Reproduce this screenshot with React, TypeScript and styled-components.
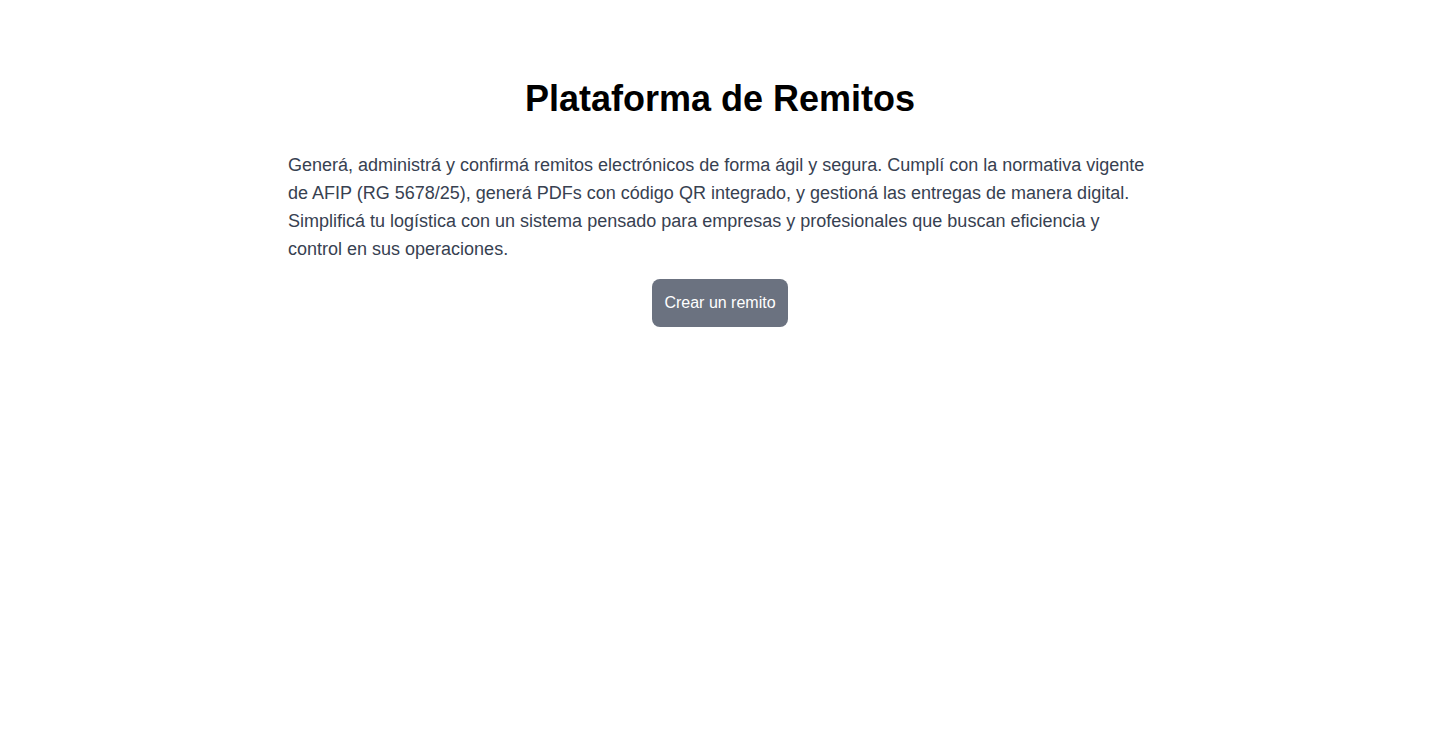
import React from 'react';
import styled, { createGlobalStyle } from 'styled-components';

const GlobalStyle = createGlobalStyle`
  * { box-sizing: border-box; }
  body {
    margin: 0;
    background: #fff;
    font-family: "Liberation Sans", Arial, sans-serif;
  }
`;

const Page = styled.main`
  max-width: 896px;
  margin: 0 auto;
  padding: 79px 16px 0;
  display: flex;
  flex-direction: column;
  align-items: center;
`;

const Title = styled.h1`
  margin: 0 0 32px;
  font-size: 36px;
  line-height: 40px;
  font-weight: 700;
  color: #000;
  text-align: center;
`;

const Intro = styled.p`
  margin: 0 0 16px;
  font-size: 18px;
  line-height: 28px;
  color: #374151;
  align-self: stretch;
`;

const PrimaryButton = styled.button`
  border: none;
  border-radius: 8px;
  background: #6b7280;
  color: #fff;
  font-family: inherit;
  font-size: 16px;
  line-height: 24px;
  padding: 12px 12px;
  cursor: pointer;
  &:hover { background: #4b5563; }
`;

const App: React.FC = () => {
  return (
    <>
      <GlobalStyle />
      <Page>
        <Title>Plataforma de Remitos</Title>
        <Intro>
          Generá, administrá y confirmá remitos electrónicos de forma ágil y segura. Cumplí con la
          normativa vigente de AFIP (RG 5678/25), generá PDFs con código QR integrado, y gestioná las
          entregas de manera digital. Simplificá tu logística con un sistema pensado para empresas y
          profesionales que buscan eficiencia y control en sus operaciones.
        </Intro>
        <PrimaryButton>Crear un remito</PrimaryButton>
      </Page>
    </>
  );
};

export default App;
